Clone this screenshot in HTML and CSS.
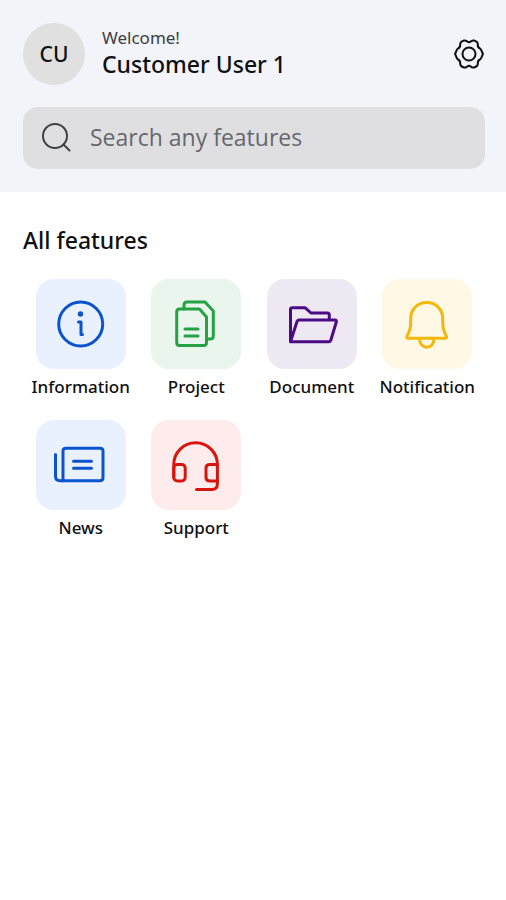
FILE: index.html
```html
<!DOCTYPE html>
<html lang="en">
<head>
<meta charset="utf-8">
<meta name="viewport" content="width=device-width, initial-scale=1">
<title>All features</title>
<link rel="stylesheet" href="styles.css">
</head>
<body>
<header class="header">
  <div class="profile">
    <div class="avatar">CU</div>
    <div class="greeting">
      <p class="welcome">Welcome!</p>
      <p class="name">Customer User 1</p>
    </div>
    <button class="settings" type="button" aria-label="Settings">
      <svg viewBox="0 0 32 32"><path d="M16 4.300C18 4.300 18.600 1.700 21 2.500C23.700 3.400 25 4.500 24.800 6.500C24.600 8.500 25.300 9.700 27 10.500C28.700 11.500 28.200 13 30 16C28.200 19 28.700 20.500 27 21.500C25.300 22.300 24.600 23.500 24.800 25.500C25 27.500 23.700 28.600 21 29.500C18.600 30.300 18 27.700 16 27.700S13.400 30.300 11 29.500C8.300 28.600 7 27.500 7.200 25.500C7.400 23.500 6.700 22.300 5 21.500C3.300 20.500 3.800 19 2 16C3.800 13 3.300 11.500 5 10.500C6.700 9.700 7.400 8.500 7.200 6.500C7 4.500 8.300 3.400 11 2.500C13.400 1.700 14 4.300 16 4.300Z"/><circle cx="16" cy="16" r="6.500"/></svg>
    </button>
  </div>
  <label class="search">
    <svg viewBox="0 0 30 30"><circle cx="13" cy="13" r="12"/><path d="m21.500 21.500 6 6"/></svg>
    <input type="search" placeholder="Search any features" aria-label="Search any features">
  </label>
</header>
<main class="content">
  <h1 class="title">All features</h1>
  <nav class="features">
    <a class="feature" href="#information">
      <span class="tile blue"><svg viewBox="0 0 90 90"><circle cx="44.700" cy="45" r="22"/><path d="M42.500 43h2.500v12.500h1.500"/><circle class="dot" cx="44.500" cy="35" r="2.700"/></svg></span>
      <span>Information</span>
    </a>
    <a class="feature" href="#project">
      <span class="tile green"><svg viewBox="0 0 90 90"><path d="M28.500 30H48.500L55.500 38V63.500Q55.500 66.500 52.500 66.500H28.500Q25.700 66.500 25.700 63.500V33Q25.700 30 28.500 30Z"/><path d="M33 30V26Q33 23 36 23H54L62.300 32V57Q62.300 60 59.300 60H56M34 50h13M34 57h13"/></svg></span>
      <span>Project</span>
    </a>
    <a class="feature" href="#document">
      <span class="tile purple"><svg viewBox="0 0 90 90"><path d="M23.500 62.700V30.500Q23.500 28.700 25.300 28.700H38L44 34H60.500Q62.300 34 62.300 36V41M23.500 62.700L30 42.500Q30.500 41 32 41H68Q69.800 41 69.300 43L63.800 61.200Q63.300 62.700 61.800 62.700Z"/></svg></span>
      <span>Document</span>
    </a>
    <a class="feature" href="#notification">
      <span class="tile yellow"><svg viewBox="0 0 90 90"><path d="M44.700 23.500C35.500 23.500 28.700 30.500 28.700 39.500V43C28.700 49.500 27.500 53 25 57Q24 59.300 26.500 59.300H63Q65.300 59.300 64.300 57C62 53 60.700 49.500 60.700 43V39.500C60.700 30.500 54 23.500 44.700 23.500Z"/><path d="M37.500 59.500C37.500 71 52 71 52 59.500"/></svg></span>
      <span>Notification</span>
    </a>
    <a class="feature" href="#news">
      <span class="tile blue"><svg viewBox="0 0 90 90"><path d="M27 61V31Q27 28.200 30 28.200H64Q67 28.200 67 31V57.500Q67 60.700 64 60.700H24Q19.500 60.700 19.500 56V34.500M37.500 41.200H55.500M37.500 48.200H55.500"/></svg></span>
      <span>News</span>
    </a>
    <a class="feature" href="#support">
      <span class="tile red"><svg viewBox="0 0 90 90"><path d="M22.800 57V44.500A21.800 21.800 0 0 1 66.400 44.500V64Q66.400 69.500 61 69.500H45.500"/><rect x="22.800" y="44.500" width="11.400" height="16.500" rx="3.500"/><path d="M66.400 44.500H59Q55 44.500 55 48V57.500Q55 61 59 61H66.400"/></svg></span>
      <span>Support</span>
    </a>
  </nav>
</main>
</body>
</html>
```
FILE: styles.css
```css
* {
  box-sizing: border-box;
}

body {
  margin: 0;
  background: #fff;
  color: #101012;
  font-family: "Noto Sans", "Open Sans", sans-serif;
}

p,
h1 {
  margin: 0;
}

svg {
  display: block;
  fill: none;
  stroke: currentColor;
  stroke-linecap: round;
  stroke-linejoin: round;
}

.header {
  display: flex;
  flex-direction: column;
  gap: 22px;
  padding: 23px 21px 23px 23px;
  background: #f2f4f9;
}

.profile {
  display: flex;
  align-items: center;
  gap: 17px;
}

.avatar {
  display: grid;
  place-items: center;
  width: 62px;
  height: 62px;
  border-radius: 50%;
  background: #e0e0e1;
  font-size: 21px;
  font-weight: 500;
}

.greeting {
  flex: 1;
  padding-bottom: 4px;
}

.welcome {
  color: #3c3d42;
  font-size: 17px;
  line-height: 24px;
}

.name {
  font-size: 23px;
  font-weight: 500;
  line-height: 28px;
}

.settings {
  padding: 0;
  border: 0;
  background: none;
  color: #101012;
}

.settings svg {
  width: 32px;
  height: 32px;
  stroke-width: 2;
}

.search {
  display: flex;
  align-items: center;
  gap: 18px;
  height: 62px;
  padding: 0 19px;
  border-radius: 15px;
  background: #dfdfe1;
  color: #3f4045;
}

.search svg {
  flex: none;
  width: 30px;
  height: 30px;
  stroke-width: 2;
}

.search input {
  flex: 1;
  min-width: 0;
  padding: 0 0 2px;
  border: 0;
  outline: 0;
  background: none;
  color: inherit;
  font: 23px "Open Sans", "Noto Sans", sans-serif;
}

.search input::placeholder {
  color: #66686d;
}

.content {
  padding: 32px 21px 32px 23px;
}

.title {
  font-size: 23px;
  font-weight: 500;
  line-height: 32px;
}

.features {
  display: grid;
  grid-template-columns: repeat(4, 1fr);
  row-gap: 21px;
  margin-top: 23px;
}

.feature {
  display: flex;
  flex-direction: column;
  align-items: center;
  gap: 6px;
  color: inherit;
  font-size: 17px;
  font-weight: 500;
  line-height: 24px;
  text-decoration: none;
}

.tile {
  border-radius: 18px;
}

.tile svg {
  width: 90px;
  height: 90px;
  stroke-width: 3;
}

.tile .dot {
  fill: currentColor;
  stroke: none;
}

.blue {
  background: #eaf1fe;
  color: #0b54ce;
}

.green {
  background: #eaf6ed;
  color: #25a244;
}

.purple {
  background: #eee8f2;
  color: #4b0b86;
}

.yellow {
  background: #fff8e5;
  color: #f2b80c;
}

.red {
  background: #feeced;
  color: #d9140c;
}
```
